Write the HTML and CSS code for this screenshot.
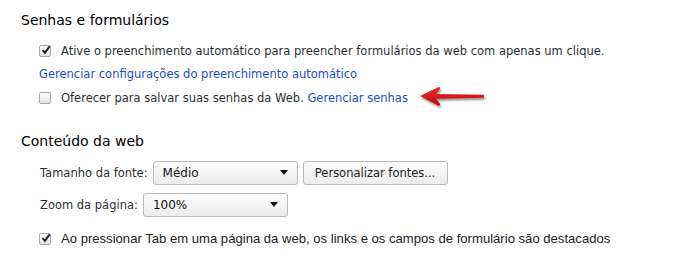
FILE: index.html
```html
<!DOCTYPE html>
<html lang="pt-BR">
<head>
<meta charset="utf-8">
<title>Configurações</title>
<link rel="stylesheet" href="styles.css">
</head>
<body>
<div class="page">
  <section class="section">
    <h3 class="section-title">Senhas e formulários</h3>
    <div class="options">
      <label class="row">
        <span class="checkbox checked"><svg viewBox="0 0 12 12" width="12" height="12"><path d="M2.6 6.2 L4.9 8.8 L9.6 2.4" fill="none" stroke="#222" stroke-width="2"/></svg></span>
        <span class="label-text">Ative o preenchimento automático para preencher formulários da web com apenas um clique.</span>
      </label>
      <div class="row link-row"><a class="link" href="#">Gerenciar configurações do preenchimento automático</a></div>
      <label class="row">
        <span class="checkbox"></span>
        <span class="label-text">Oferecer para salvar suas senhas da Web. <a class="link" href="#">Gerenciar senhas</a></span>
      </label>
    </div>
  </section>
  <section class="section second">
    <h3 class="section-title">Conteúdo da web</h3>
    <div class="options">
      <div class="row control-row">
        <span class="field-label">Tamanho da fonte:</span>
        <span class="select"><span>Médio</span><span class="caret"></span></span>
        <span class="button">Personalizar fontes...</span>
      </div>
      <div class="row control-row">
        <span class="field-label">Zoom da página:</span>
        <span class="select"><span>100%</span><span class="caret"></span></span>
      </div>
      <label class="row last-row">
        <span class="checkbox checked"><svg viewBox="0 0 12 12" width="12" height="12"><path d="M2.6 6.2 L4.9 8.8 L9.6 2.4" fill="none" stroke="#222" stroke-width="2"/></svg></span>
        <span class="label-text alt">Ao pressionar Tab em uma página da web, os links e os campos de formulário são destacados</span>
      </label>
    </div>
  </section>
  <svg class="arrow" width="72" height="24" viewBox="0 0 72 24">
    <defs>
      <linearGradient id="ag" x1="0" y1="0" x2="0" y2="1">
        <stop offset="0" stop-color="#ee2b2b"/>
        <stop offset="1" stop-color="#b80d0d"/>
      </linearGradient>
      <filter id="sh" x="-20%" y="-40%" width="140%" height="180%">
        <feGaussianBlur in="SourceAlpha" stdDeviation="1.2"/>
        <feOffset dx="1" dy="1.5" result="b"/>
        <feComponentTransfer><feFuncA type="linear" slope="0.45"/></feComponentTransfer>
        <feMerge><feMergeNode/><feMergeNode in="SourceGraphic"/></feMerge>
      </filter>
    </defs>
    <path d="M2 10 L20.5 1 Q23 1 21.8 3.6 L18 8 L66 8.8 L66 11.8 L18 12.8 L21.8 17.6 Q23 20 20.3 19.4 Z" fill="url(#ag)" filter="url(#sh)"/>
  </svg>
</div>
</body>
</html>
```

FILE: styles.css
```css
html, body {
  margin: 0;
  padding: 0;
  background: #ffffff;
}

.page {
  position: relative;
  width: 695px;
  height: 275px;
  padding: 10px 0 0 21px;
  box-sizing: border-box;
  font-family: "DejaVu Sans", sans-serif;
  font-size: 11.5px;
  color: #2b2f33;
}

.section-title {
  margin: 0;
  font-weight: normal;
  font-size: 14px;
  line-height: 20px;
  color: #000;
}

.second {
  margin-top: 21px;
}

.options {
  display: flex;
  flex-direction: column;
  padding: 9px 0 0 18px;
}

.second .options {
  padding-top: 6px;
}

.row {
  display: flex;
  align-items: center;
  height: 23.5px;
}

.checkbox {
  box-sizing: border-box;
  width: 12px;
  height: 12px;
  margin-right: 10px;
  border: 1px solid #a6a6a6;
  border-radius: 2px;
  background: linear-gradient(#fdfdfd, #e4e4e4);
  display: flex;
  align-items: center;
  justify-content: center;
  flex: none;
}

.checkbox svg {
  margin: -1px -1px 0 0;
  flex: none;
}

.link {
  color: #1a4fc2;
  text-decoration: none;
}

.control-row {
  height: 32px;
  padding-left: 1px;
}

.field-label {
  margin-right: 5px;
}

.select {
  box-sizing: border-box;
  width: 145px;
  height: 24px;
  display: flex;
  align-items: center;
  justify-content: space-between;
  padding: 0 9px 0 9px;
  border: 1px solid #b9b9b9;
  border-radius: 3px;
  background: linear-gradient(#fdfdfd, #ececec);
  color: #111;
  font-family: "DejaVu Sans", sans-serif;
  font-size: 12px;
}

.caret {
  width: 0;
  height: 0;
  border-left: 4.5px solid transparent;
  border-right: 4.5px solid transparent;
  border-top: 5px solid #111;
}

.button {
  box-sizing: border-box;
  height: 24px;
  width: 145px;
  margin-left: 5px;
  display: flex;
  align-items: center;
  justify-content: center;
  border: 1px solid #b9b9b9;
  border-radius: 3px;
  background: linear-gradient(#fdfdfd, #ececec);
  color: #222;
}

.last-row {
  height: 36px;
}

.label-text.alt {
  font-family: "Liberation Sans", Arial, sans-serif;
  font-size: 13.1px;
  color: #222;
}

.arrow {
  position: absolute;
  left: 418px;
  top: 86px;
}
```
